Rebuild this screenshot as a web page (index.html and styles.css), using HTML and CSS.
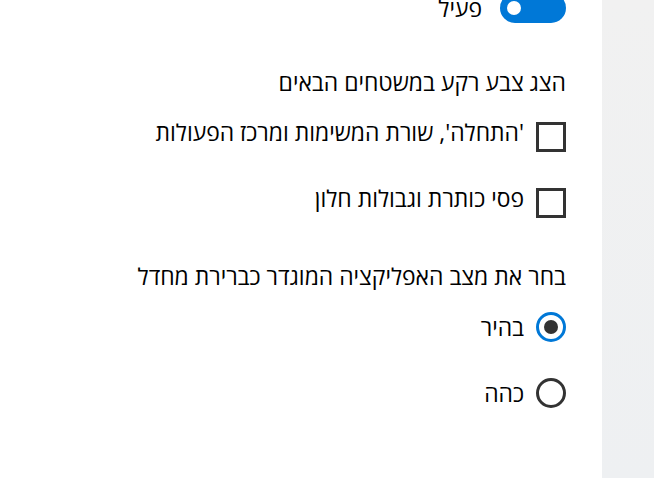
FILE: index.html
```html
<!DOCTYPE html>
<html lang="he" dir="rtl">
<head>
<meta charset="utf-8">
<title>צבעים</title>
<link rel="stylesheet" href="styles.css">
</head>
<body>
<div class="page">
  <aside class="side"></aside>
  <main class="content">
    <div class="row toggle-row">
      <span class="toggle"><span class="knob"></span></span>
      <span class="label toggle-label">פעיל</span>
    </div>
    <div class="heading h-first">הצג צבע רקע במשטחים הבאים</div>
    <div class="row cb-row cb-first">
      <span class="checkbox"></span>
      <span class="label">'התחלה', שורת המשימות ומרכז הפעולות</span>
    </div>
    <div class="row cb-row cb-next">
      <span class="checkbox"></span>
      <span class="label">פסי כותרת וגבולות חלון</span>
    </div>
    <div class="heading h-second">בחר את מצב האפליקציה המוגדר כברירת מחדל</div>
    <div class="row radio-row radio-first">
      <span class="radio checked"><span class="dot"></span></span>
      <span class="label radio-label">בהיר</span>
    </div>
    <div class="row radio-row radio-next">
      <span class="radio"></span>
      <span class="label radio-label">כהה</span>
    </div>
  </main>
</div>
</body>
</html>
```
FILE: styles.css
```css
html, body {
  margin: 0;
  padding: 0;
  height: 100%;
  overflow: hidden;
  background: #ffffff;
}

body {
  font-family: "Open Sans", "Liberation Sans", sans-serif;
  font-size: 22.9px;
  color: #000000;
}

.page {
  display: flex;
  height: 100vh;
}

.side {
  width: 52px;
  flex: none;
  background: linear-gradient(to bottom, #f1f1f1, #eef0f2);
}

.content {
  flex: 1;
  display: flex;
  flex-direction: column;
  align-items: flex-start;
  padding-right: 36px;
}

.row {
  display: flex;
  align-items: flex-start;
}

.label,
.heading {
  line-height: 22px;
  white-space: nowrap;
}

/* toggle */
.toggle-row {
  margin-top: -7px;
  gap: 18px;
}

.toggle {
  width: 66px;
  height: 30px;
  border-radius: 15px;
  background: #0078d7;
  display: flex;
  align-items: center;
  justify-content: flex-end;
  padding-left: 7px;
  box-sizing: border-box;
}

.knob {
  width: 14px;
  height: 14px;
  border-radius: 50%;
  background: #ffffff;
}

.toggle-label {
  margin-top: 5px;
}

/* headings */
.h-first {
  margin-top: 49px;
}

.h-second {
  margin-top: 48px;
}

/* checkboxes */
.cb-row {
  gap: 12px;
}

.cb-first {
  margin-top: 28px;
}

.cb-next {
  margin-top: 36px;
}

.checkbox {
  width: 30px;
  height: 30px;
  box-sizing: border-box;
  border: 3px solid #333333;
  flex: none;
}

/* radios */
.radio-row {
  gap: 12px;
}

.radio-first {
  margin-top: 24px;
}

.radio-next {
  margin-top: 36px;
}

.radio {
  width: 30px;
  height: 30px;
  box-sizing: border-box;
  border: 3px solid #333333;
  border-radius: 50%;
  flex: none;
  display: flex;
  align-items: center;
  justify-content: center;
}

.radio.checked {
  border-color: #0078d7;
}

.dot {
  width: 14px;
  height: 14px;
  border-radius: 50%;
  background: #333333;
}

.radio-label {
  margin-top: 5px;
}
```
